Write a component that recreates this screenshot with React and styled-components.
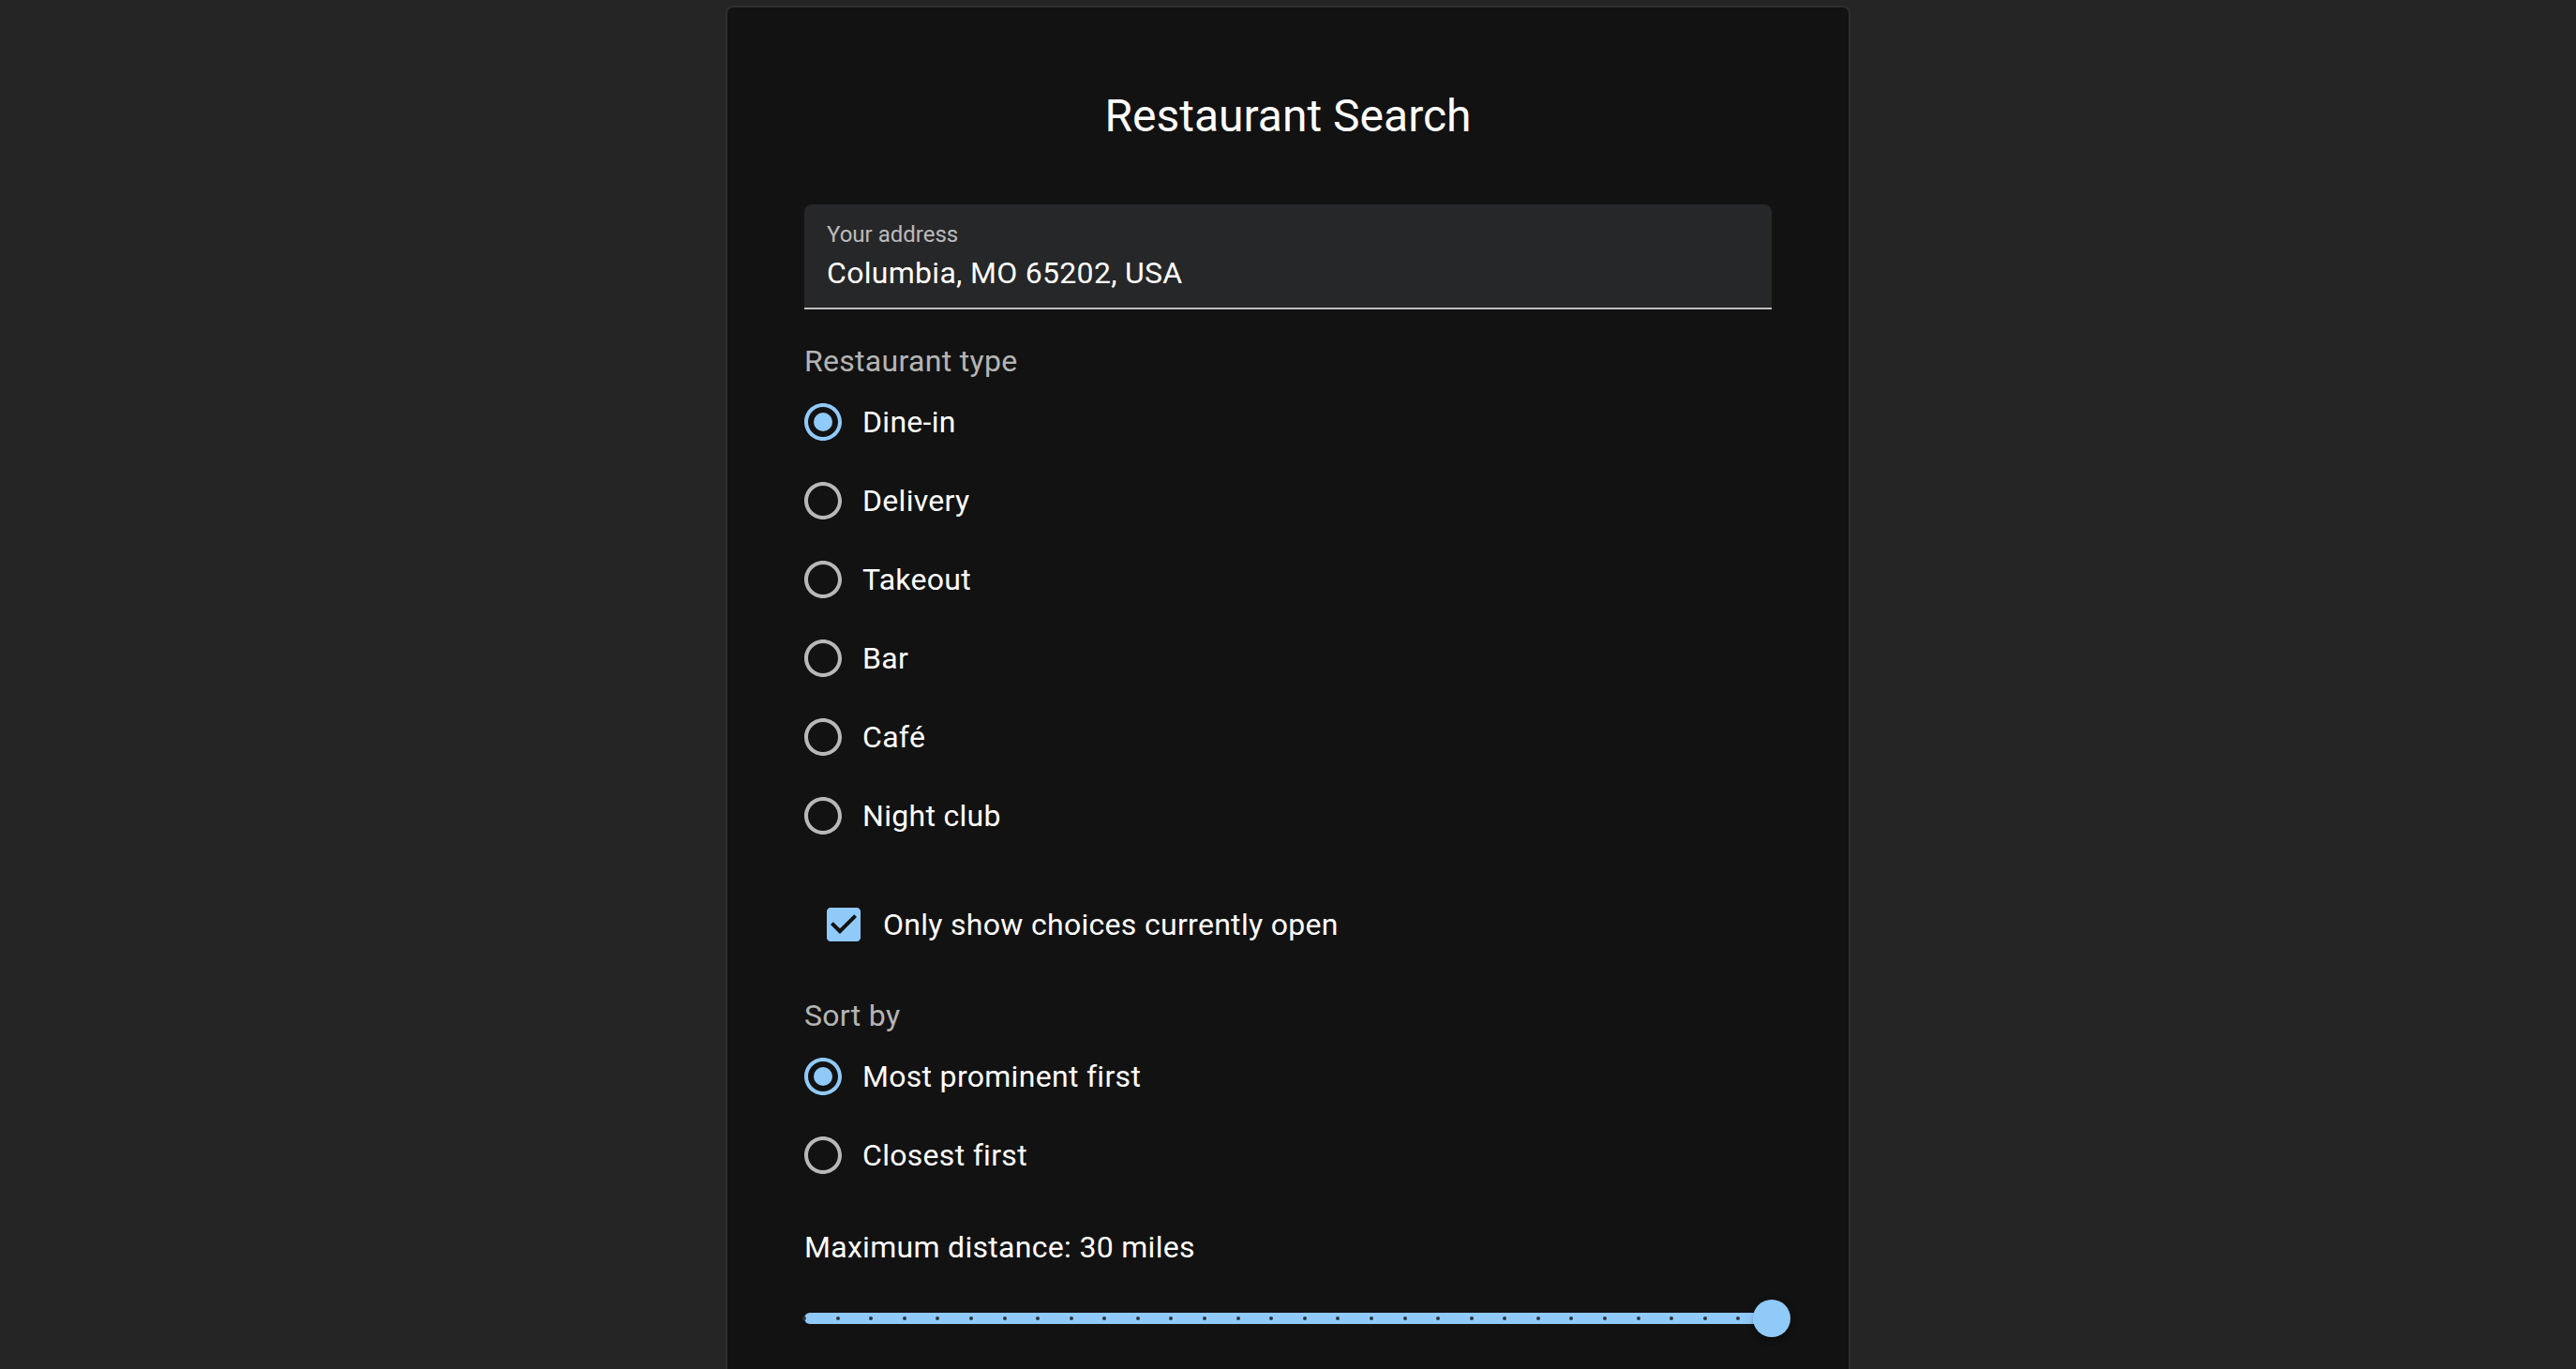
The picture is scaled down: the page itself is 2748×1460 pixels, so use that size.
import React, { useState } from 'react';
import styled, { createGlobalStyle } from 'styled-components';

const GlobalStyle = createGlobalStyle`
  html, body {
    margin: 0;
    padding: 0;
    background: #252525;
    font-family: Roboto, "Liberation Sans", Arial, sans-serif;
    color: #fff;
  }
`;

const Page = styled.div`
  display: flex;
  justify-content: center;
  padding-top: 6px;
  min-height: 1460px;
  box-sizing: border-box;
`;

const Card = styled.div`
  width: 1200px;
  box-sizing: border-box;
  background: #121212;
  border: 2px solid #2e2e2e;
  border-radius: 8px;
  padding: 84px 82px 120px;
`;

const Title = styled.h1`
  margin: 0 0 62px;
  font-size: 48px;
  line-height: 64px;
  font-weight: 400;
  text-align: center;
`;

const Field = styled.div`
  display: flex;
  flex-direction: column;
  height: 112px;
  box-sizing: border-box;
  padding: 14px 24px 14px;
  background: #262729;
  border-radius: 8px 8px 0 0;
  border-bottom: 2px solid rgba(255, 255, 255, 0.7);
`;

const FieldLabel = styled.span`
  font-size: 24px;
  line-height: 36px;
  color: rgba(255, 255, 255, 0.7);
`;

const FieldValue = styled.span`
  font-size: 32px;
  line-height: 46px;
  letter-spacing: 0.3px;
`;

const GroupLabel = styled.div`
  margin-top: ${p => p.$gap}px;
  font-size: 32px;
  line-height: 46px;
  letter-spacing: 0.3px;
  color: rgba(255, 255, 255, 0.7);
`;

const Group = styled.div`
  display: flex;
  flex-direction: column;
`;

const Option = styled.label`
  display: flex;
  align-items: center;
  height: 84px;
  margin-left: ${p => (p.$flush ? 0 : -22)}px;
  margin-top: ${p => p.$gap || 0}px;
  cursor: pointer;
  font-size: 32px;
  line-height: 48px;
  letter-spacing: 0.3px;
`;

const Control = styled.span`
  display: flex;
  align-items: center;
  justify-content: center;
  width: 84px;
  height: 84px;
  flex-shrink: 0;
  color: ${p => (p.$on ? '#90caf9' : 'rgba(255, 255, 255, 0.7)')};
`;

const Heading = styled.div`
  margin-top: 32px;
  font-size: 32px;
  line-height: 48px;
  letter-spacing: 0.3px;
`;

const Slider = styled.div`
  position: relative;
  height: 60px;
  margin-top: 22px;
`;

const Track = styled.div`
  position: absolute;
  left: 0;
  top: 24px;
  height: 12px;
  border-radius: 6px;
  background: #90caf9;
`;

const Mark = styled.span`
  position: absolute;
  top: 28px;
  width: 4px;
  height: 4px;
  margin-left: -2px;
  border-radius: 50%;
  background: #2b3740;
`;

const Thumb = styled.span`
  position: absolute;
  top: 10px;
  width: 40px;
  height: 40px;
  margin-left: -20px;
  border-radius: 50%;
  background: #90caf9;
  box-shadow: 0 6px 2px -4px rgba(0, 0, 0, 0.2), 0 4px 4px 0 rgba(0, 0, 0, 0.14),
    0 2px 10px 0 rgba(0, 0, 0, 0.12);
`;

const RadioIcon = ({ on }) => (
  <svg width="48" height="48" viewBox="0 0 24 24" fill="currentColor">
    <path d="M12 2C6.48 2 2 6.48 2 12s4.48 10 10 10 10-4.48 10-10S17.52 2 12 2zm0 18c-4.42 0-8-3.58-8-8s3.58-8 8-8 8 3.58 8 8-3.58 8-8 8z" />
    {on && <circle cx="12" cy="12" r="5" />}
  </svg>
);

const CheckIcon = () => (
  <svg width="48" height="48" viewBox="0 0 24 24" fill="currentColor">
    <path d="M19 3H5c-1.11 0-2 .9-2 2v14c0 1.1.89 2 2 2h14c1.11 0 2-.9 2-2V5c0-1.1-.89-2-2-2zm-9 14l-5-5 1.41-1.41L10 14.17l7.59-7.59L19 8l-9 9z" />
  </svg>
);

const types = ['Dine-in', 'Delivery', 'Takeout', 'Bar', 'Café', 'Night club'];
const sorts = ['Most prominent first', 'Closest first'];

const RadioList = ({ items, value, onChange }) => (
  <Group>
    {items.map(item => (
      <Option key={item} onClick={() => onChange(item)}>
        <Control $on={item === value}>
          <RadioIcon on={item === value} />
        </Control>
        {item}
      </Option>
    ))}
  </Group>
);

const MIN = 1;
const MAX = 30;

const App = () => {
  const [type, setType] = useState('Dine-in');
  const [sort, setSort] = useState('Most prominent first');
  const [openOnly, setOpenOnly] = useState(true);
  const [distance] = useState(30);

  const pct = ((distance - MIN) / (MAX - MIN)) * 100;
  const marks = [];
  for (let v = MIN; v <= MAX; v++) marks.push(v);

  return (
    <Page>
      <GlobalStyle />
      <Card>
        <Title>Restaurant Search</Title>
        <Field>
          <FieldLabel>Your address</FieldLabel>
          <FieldValue>Columbia, MO 65202, USA</FieldValue>
        </Field>

        <GroupLabel $gap={32}>Restaurant type</GroupLabel>
        <RadioList items={types} value={type} onChange={setType} />

        <Option $flush $gap={32} onClick={() => setOpenOnly(!openOnly)}>
          <Control $on={openOnly}>
            {openOnly ? <CheckIcon /> : null}
          </Control>
          Only show choices currently open
        </Option>

        <GroupLabel $gap={32}>Sort by</GroupLabel>
        <RadioList items={sorts} value={sort} onChange={setSort} />

        <Heading>Maximum distance: {distance} miles</Heading>
        <Slider>
          <Track style={{ width: `${pct}%` }} />
          {marks.map(v => (
            <Mark key={v} style={{ left: `${((v - MIN) / (MAX - MIN)) * 100}%` }} />
          ))}
          <Thumb style={{ left: `${pct}%` }} />
        </Slider>
      </Card>
    </Page>
  );
};

export default App;
